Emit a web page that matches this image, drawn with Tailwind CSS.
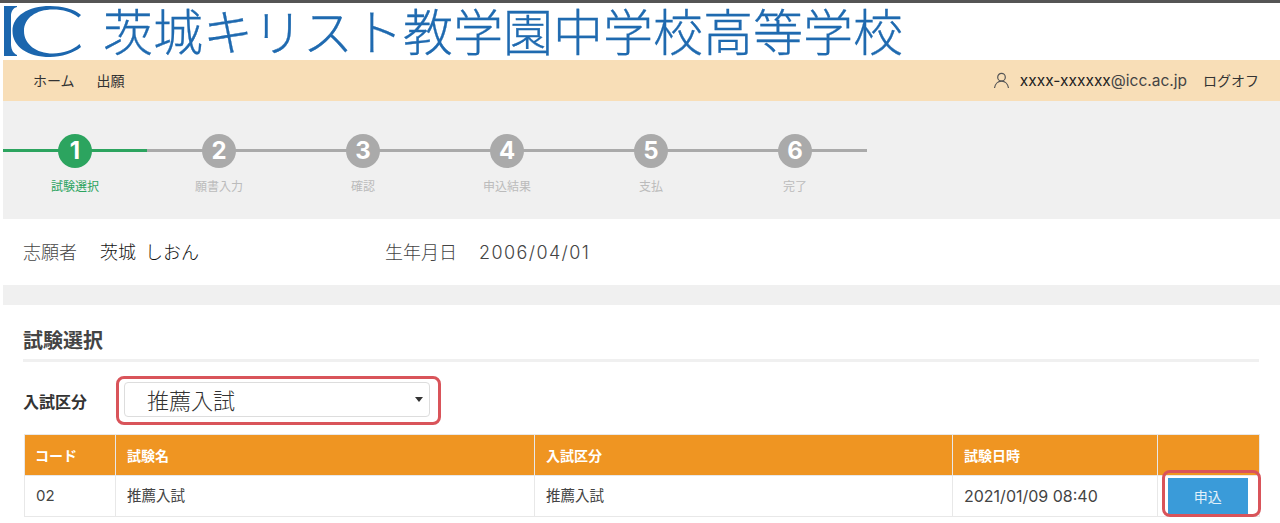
<!DOCTYPE html>
<html lang="ja">
<head>
<meta charset="utf-8">
<script src="https://cdn.jsdelivr.net/npm/@tailwindcss/browser@4"></script>
</head>
<body class="bg-white font-['Inter','Noto_Sans_CJK_JP',sans-serif] text-[#333] overflow-hidden">
<div class="h-[3px] bg-[#555]"></div>
<div class="pl-[3px] h-[520px] overflow-hidden">
  <header class="h-[57px] flex items-center">
    <svg class="w-[80px] h-[57px] shrink-0" viewBox="0 0 80 57">
      <path fill="#1b66ae" d="M1 3H14V4C10 5 8.500 8 8 12V42C8.500 47 10 50 14 52V53H1Z"/>
      <path fill="#1b66ae" d="M78 12C72 6 58 3 47 3C25 3 9.500 13 9.500 28C9.500 44 25 54 47 54C58 54 71 50 78 44L76.500 41C70 47 60 50.500 50 50.500C33 50.500 21 41 21 28C21 15 33 6.500 50 6.500C60 6.500 69 9 75.500 14.500Z"/>
    </svg>
    <div class="ml-[20px] mb-[5px] text-[50px] leading-[50px] font-light [-webkit-text-stroke:0.3px_#1f6ab0] text-[#1f6ab0] font-['Noto_Sans_CJK_JP',sans-serif] whitespace-nowrap">茨城キリスト教学園中学校高等学校</div>
  </header>
  <nav class="h-[41px] bg-[#f8deb7] flex items-center justify-between pl-[30px] pr-[21px] text-[14px] text-[#333]">
    <div class="flex gap-[22px]"><span>ホーム</span><span>出願</span></div>
    <div class="flex items-center">
      <svg class="w-[17px] h-[17px] text-[#555]" viewBox="0 0 17 17" fill="none" stroke="currentColor" stroke-width="1.2"><circle cx="8.500" cy="5.200" r="3.800"/><path d="M1.500 16c.6-4 3.400-6.800 7-6.800s6.400 2.800 7 6.800"/></svg>
      <span class="ml-[10px] text-[15.500px] text-[#222]">xxxx-xxxxxx<span class="text-[#444]">@icc.ac.jp</span></span>
      <span class="ml-[16px]">ログオフ</span>
    </div>
  </nav>
  <section class="h-[118px] bg-[#f0f0f0] flex items-start pt-[33px]">
    <div class="relative w-[144px] flex flex-col items-center"><div class="absolute left-0 right-0 top-[15px] h-[3px] bg-[#2ca45f]"></div><div class="relative w-[34px] h-[34px] rounded-full bg-[#2ca45f] text-white font-bold text-[24px] flex items-center justify-center">1</div><div class="mt-[10px] text-[12px] text-[#2ca45f]">試験選択</div></div>
    <div class="relative w-[144px] flex flex-col items-center"><div class="absolute left-0 right-0 top-[15px] h-[3px] bg-[#aaa]"></div><div class="relative w-[34px] h-[34px] rounded-full bg-[#aaa] text-white font-bold text-[24px] flex items-center justify-center">2</div><div class="mt-[10px] text-[12px] text-[#bbb]">願書入力</div></div>
    <div class="relative w-[144px] flex flex-col items-center"><div class="absolute left-0 right-0 top-[15px] h-[3px] bg-[#aaa]"></div><div class="relative w-[34px] h-[34px] rounded-full bg-[#aaa] text-white font-bold text-[24px] flex items-center justify-center">3</div><div class="mt-[10px] text-[12px] text-[#bbb]">確認</div></div>
    <div class="relative w-[144px] flex flex-col items-center"><div class="absolute left-0 right-0 top-[15px] h-[3px] bg-[#aaa]"></div><div class="relative w-[34px] h-[34px] rounded-full bg-[#aaa] text-white font-bold text-[24px] flex items-center justify-center">4</div><div class="mt-[10px] text-[12px] text-[#bbb]">申込結果</div></div>
    <div class="relative w-[144px] flex flex-col items-center"><div class="absolute left-0 right-0 top-[15px] h-[3px] bg-[#aaa]"></div><div class="relative w-[34px] h-[34px] rounded-full bg-[#aaa] text-white font-bold text-[24px] flex items-center justify-center">5</div><div class="mt-[10px] text-[12px] text-[#bbb]">支払</div></div>
    <div class="relative w-[144px] flex flex-col items-center"><div class="absolute left-0 right-0 top-[15px] h-[3px] bg-[#aaa]"></div><div class="relative w-[34px] h-[34px] rounded-full bg-[#aaa] text-white font-bold text-[24px] flex items-center justify-center">6</div><div class="mt-[10px] text-[12px] text-[#bbb]">完了</div></div>
  </section>
  <section class="h-[66px] flex items-center pl-[20px] text-[18px] font-light text-[#444]">
    <span>志願者</span><span class="ml-[23px] text-[#111]">茨城</span><span class="ml-[9px] text-[#111]">しおん</span>
    <span class="ml-[186px]">生年月日</span><span class="ml-[22px] tracking-[1.400px]">2006/04/01</span>
  </section>
  <div class="h-[20px] bg-[#f0f0f0]"></div>
  <section class="pl-[21px] pr-[21px]">
    <h2 class="h-[57px] pt-[21px] -ml-px pl-px border-b-[3px] border-[#f0f0f0] text-[20px] leading-[30px] font-bold text-[#444]"><span class="-ml-px">試験選択</span></h2>
    <div class="flex items-center h-[72px] pt-[3px]">
      <label class="w-[100px] -ml-px mr-px text-[16px] font-bold text-[#333] mt-[5px]">入試区分</label>
      <div class="w-[306px] h-[35px] border border-[#ddd] rounded-[4px] flex items-center justify-between pl-[22px] pr-[5px] text-[22px] font-light text-[#333] relative">
        <span class="mt-[3px]">推薦入試</span>
        <span class="w-0 h-0 border-x-[4px] border-x-transparent border-t-[5px] border-t-[#333] mr-[1px]"></span>
        <div class="absolute left-[-9px] right-[-12px] top-[-7px] bottom-[-9px] border-[3px] border-[#d9545a] rounded-[8px]"></div>
      </div>
    </div>
    <table class="w-[1236px] table-fixed border-collapse text-[14px]">
      <thead>
        <tr class="h-[41px] bg-[#ef9522] text-white font-bold text-left">
          <th class="w-[91px] border border-[#e8e8e8] pl-[10px] font-bold">コード</th>
          <th class="w-[419px] border border-[#e8e8e8] pl-[11px] font-bold">試験名</th>
          <th class="w-[418px] border border-[#e8e8e8] pl-[11px] font-bold">入試区分</th>
          <th class="w-[205px] border border-[#e8e8e8] pl-[11px] font-bold">試験日時</th>
          <th class="border border-[#e8e8e8]"></th>
        </tr>
      </thead>
      <tbody>
        <tr class="h-[41px] text-[#444]">
          <td class="border border-[#e8e8e8] pl-[11px] text-[15px]">02</td>
          <td class="border border-[#e8e8e8] pl-[11px] text-[14.500px]">推薦入試</td>
          <td class="border border-[#e8e8e8] pl-[11px] text-[14.500px]">推薦入試</td>
          <td class="border border-[#e8e8e8] pl-[11px] text-[16px]">2021/01/09 08:40</td>
          <td class="border border-[#e8e8e8] relative">
            <div class="ml-[9.500px] w-[80.500px] h-[36px] bg-[#3a9bd9] text-[#e3f1fa] flex items-center justify-center">申込</div>
            <div class="absolute left-[4px] right-[-2px] top-[-6px] bottom-[-1px] border-[3px] border-[#d9545a] rounded-[8px]"></div>
          </td>
        </tr>
      </tbody>
    </table>
  </section>
</div>
</body>
</html>
